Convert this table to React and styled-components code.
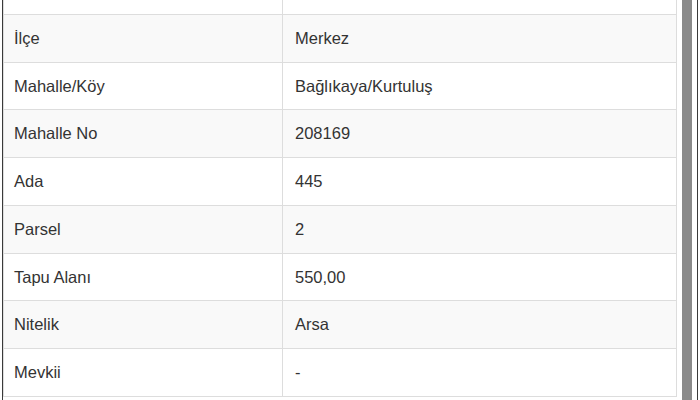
import React from "react";
import styled, { createGlobalStyle } from "styled-components";

const GlobalStyle = createGlobalStyle`
  html, body {
    margin: 0;
    padding: 0;
    background: #fff;
    overflow: hidden;
  }
  body {
    font-family: "Liberation Sans", Arial, sans-serif;
  }
`;

const Frame = styled.div`
  width: 700px;
  height: 400px;
  box-sizing: border-box;
  padding: 0 2px;
  overflow: hidden;
`;

const Window = styled.div`
  display: flex;
  height: 100%;
  border-left: 1px solid #3a3a3a;
  border-right: 1px solid #3a3a3a;
  overflow: hidden;
`;

const Content = styled.div`
  flex: 1;
  overflow: hidden;
`;

const ScrollTrack = styled.div`
  width: 20px;
  display: flex;
  padding-left: 5px;
  padding-right: 5px;
  box-sizing: border-box;
`;

const Thumb = styled.div`
  flex: 1;
  background: #8a8a8a;
`;

const Table = styled.table`
  width: 100%;
  margin-top: -34px;
  table-layout: fixed;
  border-collapse: collapse;
  border: 1px solid #ddd;
  font-size: 16.5px;
  color: #333;
`;

const LabelCol = styled.col`
  width: 279px;
`;

const Row = styled.tr`
  background: ${({ $striped }) => ($striped ? "#f9f9f9" : "#fff")};
`;

const Cell = styled.td`
  border: 1px solid #ddd;
  padding: 13px 12px 13px ${({ $first }) => ($first ? "10px" : "12px")};
  line-height: 20.75px;
  white-space: nowrap;
  overflow: hidden;
`;

const rows = [
  ["İl", "Kırıkkale"],
  ["İlçe", "Merkez"],
  ["Mahalle/Köy", "Bağlıkaya/Kurtuluş"],
  ["Mahalle No", "208169"],
  ["Ada", "445"],
  ["Parsel", "2"],
  ["Tapu Alanı", "550,00"],
  ["Nitelik", "Arsa"],
  ["Mevkii", "-"],
];

const App = () => (
  <>
    <GlobalStyle />
    <Frame>
      <Window>
        <Content>
          <Table>
            <colgroup>
              <LabelCol />
              <col />
            </colgroup>
            <tbody>
              {rows.map(([label, value], i) => (
                <Row key={label} $striped={i % 2 === 1}>
                  <Cell $first>{label}</Cell>
                  <Cell>{value}</Cell>
                </Row>
              ))}
            </tbody>
          </Table>
        </Content>
        <ScrollTrack>
          <Thumb />
        </ScrollTrack>
      </Window>
    </Frame>
  </>
);

export default App;
